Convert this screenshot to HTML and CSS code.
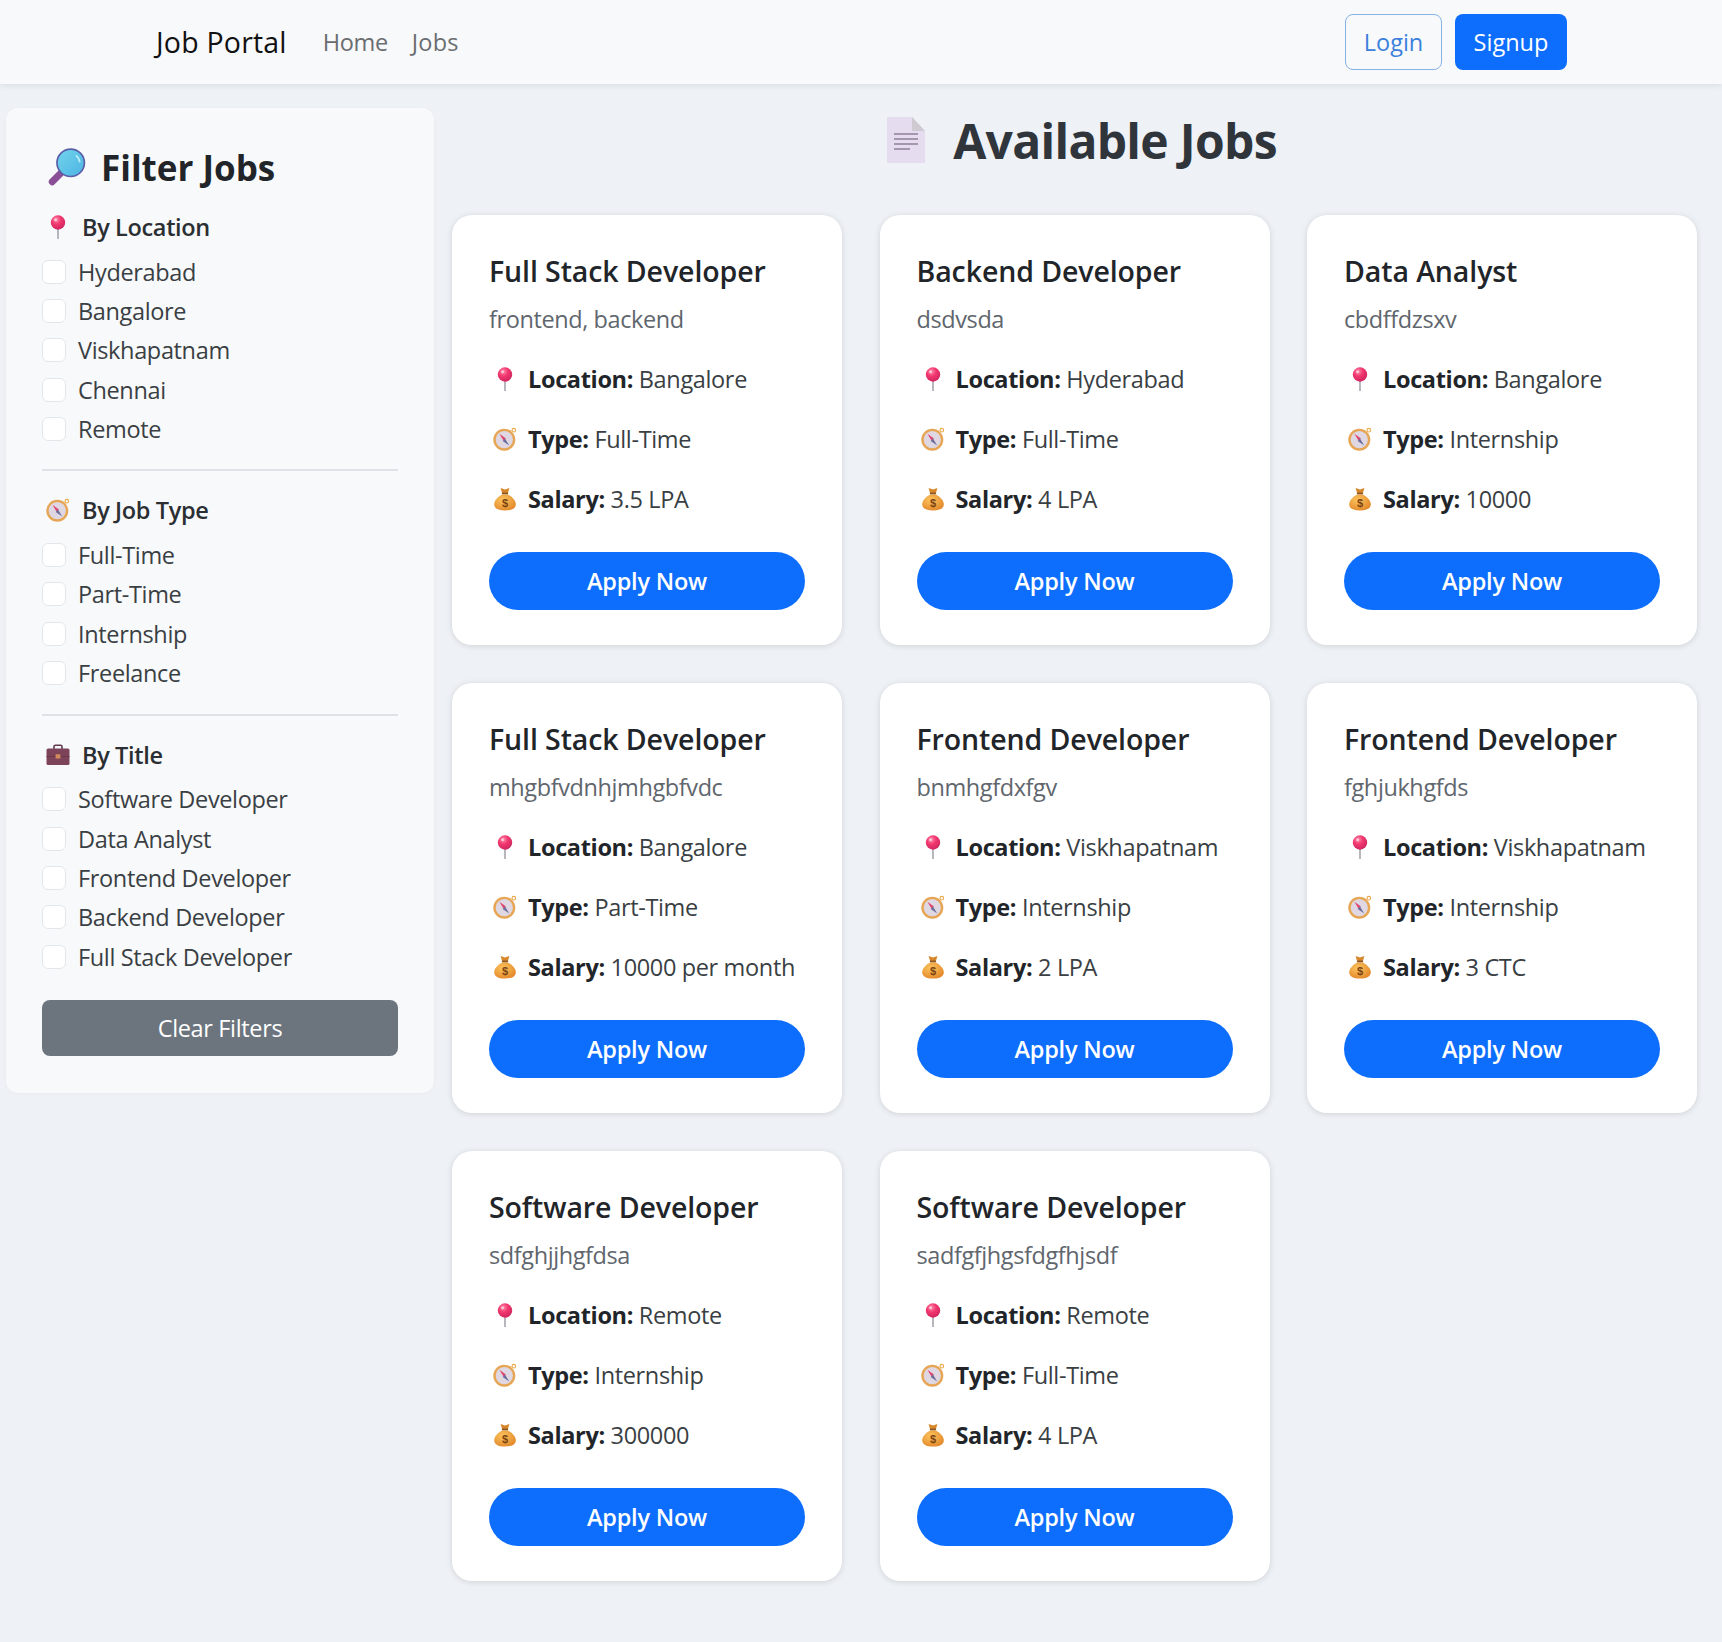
FILE: index.html
```html
<!DOCTYPE html>
<html lang="en">
<head>
  <meta charset="UTF-8">
  <title>Job Portal</title>
  <link rel="stylesheet" href="styles.css">
</head>
<body>
  <!-- emoji drawings, reused below -->
  <svg class="defs" width="0" height="0" aria-hidden="true">
    <defs>
      <radialGradient id="pinHead" cx="0.38" cy="0.3" r="0.8">
        <stop offset="0" stop-color="#ff8fb0"/>
        <stop offset="0.4" stop-color="#f2386f"/>
        <stop offset="1" stop-color="#c9215c"/>
      </radialGradient>
      <radialGradient id="bagFill" cx="0.4" cy="0.35" r="0.8">
        <stop offset="0" stop-color="#fbc45e"/>
        <stop offset="1" stop-color="#e07f22"/>
      </radialGradient>
      <linearGradient id="lensFill" x1="0" y1="0" x2="1" y2="1">
        <stop offset="0" stop-color="#72d4ee"/>
        <stop offset="1" stop-color="#4db4e2"/>
      </linearGradient>
      <symbol id="pin" viewBox="0 0 24 24">
        <rect x="11.2" y="10" width="1.6" height="14" fill="#a9a6ae"/>
        <circle cx="12" cy="7.5" r="7.2" fill="url(#pinHead)"/>
        <circle cx="9.6" cy="4.8" r="1.5" fill="#ffc4d6"/>
      </symbol>
      <symbol id="compass" viewBox="0 0 24 24">
        <circle cx="20.8" cy="3.2" r="1.8" fill="none" stroke="#eca94a" stroke-width="1.1"/>
        <circle cx="11.3" cy="12.7" r="11" fill="#e6a655"/>
        <circle cx="11.3" cy="12.7" r="8.6" fill="#dfd8e2"/>
        <path d="M6.4 6.8 L12.9 11.4 L10.6 13.8 Z" fill="#e0456f"/>
        <path d="M16.2 18.6 L9.7 14 L12 11.6 Z" fill="#6c6d9c"/>
      </symbol>
      <symbol id="bag" viewBox="0 0 24 24">
        <path d="M7.6 1 L12 2.6 L16.4 1 L14.8 6.4 H9.2 Z" fill="#d8862a"/>
        <rect x="8.8" y="5.6" width="6.4" height="2" rx="1" fill="#8b5a2b"/>
        <path d="M9.2 7.4 H14.8 C19.4 10 22.8 13.6 22.8 17.2 C22.8 21.4 18.8 23.5 12 23.5 C5.2 23.5 1.2 21.4 1.2 17.2 C1.2 13.6 4.6 10 9.2 7.4 Z" fill="url(#bagFill)"/>
        <text x="12" y="20.4" text-anchor="middle" class="bag-sign">$</text>
      </symbol>
      <symbol id="case" viewBox="0 0 24 24">
        <path d="M8 6 V3.6 C8 2.8 8.6 2.2 9.4 2.2 H14.6 C15.4 2.2 16 2.8 16 3.6 V6" fill="none" stroke="#5f3a4c" stroke-width="1.6"/>
        <rect x="0.5" y="5.4" width="23" height="16.6" rx="1.6" fill="#7d4459"/>
        <rect x="0.5" y="13" width="23" height="1" fill="#6b394c"/>
        <rect x="9.6" y="11.2" width="4.8" height="4.4" rx="0.6" fill="#d38a5a"/>
      </symbol>
      <symbol id="lens" viewBox="0 0 36 36">
        <path d="M4 32 L13 23" stroke="#8a4f97" stroke-width="6.5" stroke-linecap="round"/>
        <circle cx="21.5" cy="14" r="13" fill="url(#lensFill)" stroke="#5a5fa8" stroke-width="1.6"/>
        <path d="M27 7.5 A9 9 0 0 1 30 13" fill="none" stroke="#bff0fa" stroke-width="1.6" stroke-linecap="round"/>
      </symbol>
      <symbol id="page" viewBox="0 0 40 48">
        <path d="M1 1 H26 L39 15 V47 H1 Z" fill="#e6dcef"/>
        <path d="M26 1 L39 15 H26 Z" fill="#cfcad2"/>
        <rect x="8" y="17" width="24" height="2" fill="#a596af"/>
        <rect x="8" y="22" width="24" height="2" fill="#a596af"/>
        <rect x="8" y="27" width="24" height="2" fill="#a596af"/>
        <rect x="8" y="32" width="16" height="2" fill="#a596af"/>
      </symbol>
    </defs>
  </svg>

  <!-- Navbar -->
  <nav class="navbar">
    <a class="brand" href="#">Job Portal</a>
    <a class="nav-link" href="#">Home</a>
    <a class="nav-link" href="#">Jobs</a>
    <div class="nav-actions">
      <a class="btn btn-outline" href="#">Login</a>
      <a class="btn btn-blue" href="#">Signup</a>
    </div>
  </nav>

  <div class="page">
    <!-- Filters -->
    <aside class="sidebar">
      <h2 class="sidebar-title"><svg class="icon-lens"><use href="#lens"/></svg>Filter Jobs</h2>

      <h3 class="filter-head"><svg class="icon"><use href="#pin"/></svg>By Location</h3>
      <label class="check"><input type="checkbox">Hyderabad</label>
      <label class="check"><input type="checkbox">Bangalore</label>
      <label class="check"><input type="checkbox">Viskhapatnam</label>
      <label class="check"><input type="checkbox">Chennai</label>
      <label class="check"><input type="checkbox">Remote</label>
      <hr class="divider">

      <h3 class="filter-head"><svg class="icon"><use href="#compass"/></svg>By Job Type</h3>
      <label class="check"><input type="checkbox">Full-Time</label>
      <label class="check"><input type="checkbox">Part-Time</label>
      <label class="check"><input type="checkbox">Internship</label>
      <label class="check"><input type="checkbox">Freelance</label>
      <hr class="divider">

      <h3 class="filter-head"><svg class="icon"><use href="#case"/></svg>By Title</h3>
      <label class="check"><input type="checkbox">Software Developer</label>
      <label class="check"><input type="checkbox">Data Analyst</label>
      <label class="check"><input type="checkbox">Frontend Developer</label>
      <label class="check"><input type="checkbox">Backend Developer</label>
      <label class="check"><input type="checkbox">Full Stack Developer</label>

      <button class="btn-clear">Clear Filters</button>
    </aside>

    <!-- Job list -->
    <main class="jobs">
      <h1 class="jobs-title"><svg class="icon-page"><use href="#page"/></svg>Available Jobs</h1>

      <div class="job-grid">
        <div class="job-card">
          <h4>Full Stack Developer</h4>
          <p class="desc">frontend, backend</p>
          <p class="info"><svg class="icon"><use href="#pin"/></svg><b>Location:</b> Bangalore</p>
          <p class="info"><svg class="icon"><use href="#compass"/></svg><b>Type:</b> Full-Time</p>
          <p class="info"><svg class="icon"><use href="#bag"/></svg><b>Salary:</b> 3.5 LPA</p>
          <a class="apply" href="#">Apply Now</a>
        </div>
        <div class="job-card">
          <h4>Backend Developer</h4>
          <p class="desc">dsdvsda</p>
          <p class="info"><svg class="icon"><use href="#pin"/></svg><b>Location:</b> Hyderabad</p>
          <p class="info"><svg class="icon"><use href="#compass"/></svg><b>Type:</b> Full-Time</p>
          <p class="info"><svg class="icon"><use href="#bag"/></svg><b>Salary:</b> 4 LPA</p>
          <a class="apply" href="#">Apply Now</a>
        </div>
        <div class="job-card">
          <h4>Data Analyst</h4>
          <p class="desc">cbdffdzsxv</p>
          <p class="info"><svg class="icon"><use href="#pin"/></svg><b>Location:</b> Bangalore</p>
          <p class="info"><svg class="icon"><use href="#compass"/></svg><b>Type:</b> Internship</p>
          <p class="info"><svg class="icon"><use href="#bag"/></svg><b>Salary:</b> 10000</p>
          <a class="apply" href="#">Apply Now</a>
        </div>
        <div class="job-card">
          <h4>Full Stack Developer</h4>
          <p class="desc">mhgbfvdnhjmhgbfvdc</p>
          <p class="info"><svg class="icon"><use href="#pin"/></svg><b>Location:</b> Bangalore</p>
          <p class="info"><svg class="icon"><use href="#compass"/></svg><b>Type:</b> Part-Time</p>
          <p class="info"><svg class="icon"><use href="#bag"/></svg><b>Salary:</b> 10000 per month</p>
          <a class="apply" href="#">Apply Now</a>
        </div>
        <div class="job-card">
          <h4>Frontend Developer</h4>
          <p class="desc">bnmhgfdxfgv</p>
          <p class="info"><svg class="icon"><use href="#pin"/></svg><b>Location:</b> Viskhapatnam</p>
          <p class="info"><svg class="icon"><use href="#compass"/></svg><b>Type:</b> Internship</p>
          <p class="info"><svg class="icon"><use href="#bag"/></svg><b>Salary:</b> 2 LPA</p>
          <a class="apply" href="#">Apply Now</a>
        </div>
        <div class="job-card">
          <h4>Frontend Developer</h4>
          <p class="desc">fghjukhgfds</p>
          <p class="info"><svg class="icon"><use href="#pin"/></svg><b>Location:</b> Viskhapatnam</p>
          <p class="info"><svg class="icon"><use href="#compass"/></svg><b>Type:</b> Internship</p>
          <p class="info"><svg class="icon"><use href="#bag"/></svg><b>Salary:</b> 3 CTC</p>
          <a class="apply" href="#">Apply Now</a>
        </div>
        <div class="job-card">
          <h4>Software Developer</h4>
          <p class="desc">sdfghjjhgfdsa</p>
          <p class="info"><svg class="icon"><use href="#pin"/></svg><b>Location:</b> Remote</p>
          <p class="info"><svg class="icon"><use href="#compass"/></svg><b>Type:</b> Internship</p>
          <p class="info"><svg class="icon"><use href="#bag"/></svg><b>Salary:</b> 300000</p>
          <a class="apply" href="#">Apply Now</a>
        </div>
        <div class="job-card">
          <h4>Software Developer</h4>
          <p class="desc">sadfgfjhgsfdgfhjsdf</p>
          <p class="info"><svg class="icon"><use href="#pin"/></svg><b>Location:</b> Remote</p>
          <p class="info"><svg class="icon"><use href="#compass"/></svg><b>Type:</b> Full-Time</p>
          <p class="info"><svg class="icon"><use href="#bag"/></svg><b>Salary:</b> 4 LPA</p>
          <a class="apply" href="#">Apply Now</a>
        </div>
      </div>
    </main>
  </div>
</body>
</html>
```

FILE: styles.css
```css
html, body {
  margin: 0;
  padding: 0;
}

body {
  min-height: 1642px;
  background: #eef1f5;
  color: #212529;
  font-family: "Open Sans", "Noto Sans", sans-serif;
  font-size: 23.5px;
  letter-spacing: -.35px;
}

a {
  text-decoration: none;
}

.defs {
  position: absolute;
}

.bag-sign {
  font-family: "Liberation Sans", sans-serif;
  font-size: 11px;
  font-weight: 700;
  fill: #7a4312;
}

/* Navbar */
.navbar {
  display: flex;
  align-items: center;
  height: 84px;
  padding: 0 155px;
  background: #f8f9fa;
  box-shadow: 0 2px 6px rgba(0, 0, 0, .08);
}

.brand {
  margin: 0 36px 0 1px;
  font-size: 28.5px;
  letter-spacing: .2px;
  color: #111;
}

.nav-link {
  margin-right: 24px;
  color: #6a6d70;
}

.nav-link + .nav-link {
  letter-spacing: .2px;
}

.nav-actions {
  display: flex;
  gap: 13px;
  margin-left: auto;
}

.btn {
  display: flex;
  align-items: center;
  justify-content: center;
  height: 56px;
  box-sizing: border-box;
  border-radius: 8px;
  letter-spacing: 0;
}

.btn-outline {
  width: 97px;
  border: 1.5px solid #86b2e6;
  color: #3b80dc;
}

.btn-blue {
  width: 112px;
  background: #0d6efd;
  color: #fff;
}

/* Layout */
.page {
  display: flex;
  align-items: flex-start;
  gap: 18px;
  padding: 24px 24px 0 6px;
}

/* Sidebar */
.sidebar {
  width: 428px;
  box-sizing: border-box;
  padding: 36px 36px 37px;
  background: #f8f9fa;
  border-radius: 12px;
  box-shadow: 0 1px 4px rgba(0, 0, 0, .03);
}

.sidebar-title {
  display: flex;
  align-items: center;
  gap: 15px;
  margin: 0 0 19px 6px;
  height: 46px;
  font-size: 35px;
  font-weight: 700;
  letter-spacing: 0;
}

.icon-lens {
  width: 38px;
  height: 38px;
}

.filter-head {
  display: flex;
  align-items: center;
  gap: 12px;
  margin: 0 0 7px 4px;
  height: 36px;
  font-size: 23.5px;
  font-weight: 600;
  color: #2b2f33;
}

.icon {
  flex: none;
  width: 24px;
  height: 24px;
}

.check {
  display: flex;
  align-items: center;
  gap: 12px;
  height: 39.3px;
  color: #3a3f44;
}

.check input {
  appearance: none;
  flex: none;
  width: 24px;
  height: 24px;
  margin: 0;
  background: #fff;
  border: 1px solid #e4e7ea;
  border-radius: 6px;
}

.divider {
  height: 2px;
  margin: 21px 0 21px;
  border: 0;
  background: #dfe2e6;
}

.btn-clear {
  display: block;
  width: 100%;
  height: 56px;
  margin-top: 24px;
  padding: 0;
  border: 0;
  border-radius: 8px;
  background: #6c757d;
  color: #fff;
  font: inherit;
  letter-spacing: inherit;
}

/* Jobs */
.jobs {
  width: 1246px;
}

.jobs-title {
  display: flex;
  align-items: center;
  justify-content: center;
  gap: 27px;
  height: 64px;
  margin: 0 0 43px;
  padding-left: 13px;
  font-size: 48px;
  font-weight: 700;
  letter-spacing: -.7px;
  color: #2f353b;
}

.icon-page {
  width: 40px;
  height: 48px;
}

.job-grid {
  display: grid;
  grid-template-columns: repeat(3, 390px);
  gap: 38px 37.5px;
}

.job-card {
  box-sizing: border-box;
  height: 430px;
  padding: 36px 37px;
  background: #fff;
  border-radius: 20px;
  box-shadow: 0 1px 6px rgba(0, 0, 0, .13);
}

.job-card h4 {
  margin: 0;
  height: 40px;
  line-height: 40px;
  font-size: 28.5px;
  font-weight: 600;
  letter-spacing: -.1px;
}

.desc {
  margin: 10px 0 0;
  height: 36px;
  line-height: 36px;
  letter-spacing: -.4px;
  color: #5f666d;
}

.info {
  display: flex;
  align-items: center;
  margin: 24px 0 0;
  height: 36px;
  white-space: pre;
  color: #3a3f44;
}

.info .icon {
  margin: 0 11px 0 4px;
}

.info b {
  font-weight: 700;
  color: #212529;
}

.apply {
  display: block;
  height: 58px;
  margin-top: 35px;
  border-radius: 29px;
  background: #0d6efd;
  color: #fff;
  font-weight: 600;
  letter-spacing: -.2px;
  line-height: 58px;
  text-align: center;
}
```
